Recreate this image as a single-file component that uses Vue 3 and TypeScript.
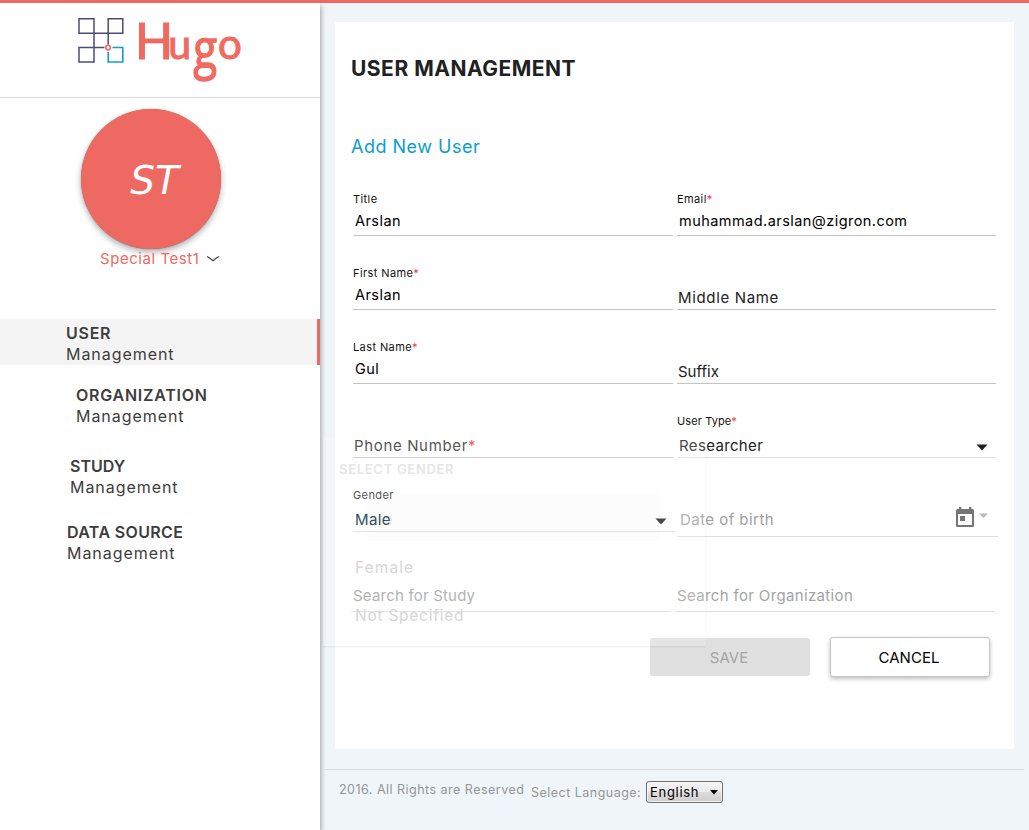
<script setup lang="ts">
interface NavItem {
  title: string
  kind: string
}

interface Field {
  key: string
  label?: string
  value?: string
  required?: boolean
  icon?: 'arrow' | 'calendar'
}

const navItems: NavItem[] = [
  { title: 'USER', kind: 'user' },
  { title: 'ORGANIZATION', kind: 'organization' },
  { title: 'STUDY', kind: 'study' },
  { title: 'DATA SOURCE', kind: 'source' },
]

const fields: Field[] = [
  { key: 'title', label: 'Title', value: 'Arslan' },
  { key: 'email', label: 'Email', value: 'muhammad.arslan@zigron.com', required: true },
  { key: 'first', label: 'First Name', value: 'Arslan', required: true },
  { key: 'middle', label: 'Middle Name' },
  { key: 'last', label: 'Last Name', value: 'Gul', required: true },
  { key: 'suffix', label: 'Suffix' },
  { key: 'phone', label: 'Phone Number', required: true },
  { key: 'type', label: 'User Type', value: 'Researcher', required: true, icon: 'arrow' },
  { key: 'gender', label: 'Gender', value: 'Male', icon: 'arrow' },
  { key: 'birth', label: 'Date of birth', icon: 'calendar' },
  { key: 'find-study', label: 'Search for Study' },
  { key: 'find-org', label: 'Search for Organization' },
]
</script>

<template>
  <div class="page">
    <aside class="sidebar">
      <div class="brand">
        <svg class="logo" width="180" height="90" viewBox="70 3 180 90">
          <g fill="none" stroke="#4d4b7c" stroke-width="1.5">
            <path d="M79 18.8H94V33.3H79ZM108.2 18.8H122.8V33.3H108.2ZM79 47.5H94V62H79Z" />
            <path d="M94 33.3H108.2V44.5M94 33.3V47.5H104.5" />
          </g>
          <path d="M112.5 47.5H122.8V62H108.2V52" fill="none" stroke="#109cd8" stroke-width="1.6" />
          <circle cx="108.1" cy="47.6" r="2.3" fill="#fff" stroke="#ef6862" stroke-width="1.6" />
          <g class="wordmark">
            <text x="135" y="58.5" font-size="50">H</text>
            <text x="168.3" y="58.8" font-size="41">u</text>
            <text class="wordmark-g" transform="translate(193.2 67.5) scale(1.07 1.35)" font-size="41">g</text>
            <text x="218" y="58.800" font-size="42">o</text>
          </g>
        </svg>
      </div>
      <div class="profile">
        <div class="avatar"><span>ST</span></div>
        <div class="account">
          <span class="account-name">Special Test1</span>
          <svg width="14" height="8" viewBox="0 0 14 8"><path d="M1 1.5Q4 3 7 5.8Q10 3 13 1.5" fill="none" stroke="#444" stroke-width="1.2" /></svg>
        </div>
      </div>
      <nav>
        <a v-for="item in navItems" :key="item.kind" class="nav-item" :class="'nav-' + item.kind">
          <b>{{ item.title }}</b>
          <span>Management</span>
        </a>
      </nav>
    </aside>

    <main>
      <section class="card">
        <h1>USER MANAGEMENT</h1>
        <h2>Add New User</h2>
        <form class="fields">
          <div
            v-for="f in fields"
            :key="f.key"
            class="field"
            :class="['f-' + f.key, f.value ? 'filled' : 'empty']"
          >
            <label><span class="label-text">{{ f.label }}</span><i v-if="f.required">*</i></label>
            <div v-if="f.value" class="value">{{ f.value }}</div>
            <svg v-if="f.icon === 'arrow'" class="arrow" width="12" height="7" viewBox="0 0 12 7"><path d="M.5 .5H11.5L6 6.5Z" fill="currentColor" /></svg>
            <svg v-if="f.icon === 'calendar'" class="calendar" width="34" height="22" viewBox="0 0 34 22">
              <path d="M3 0H5.4V2H13V0H15.4V2H16.5Q18 2 18 3.5V18.5Q18 20 16.5 20H1.5Q0 20 0 18.500V3.500Q0 2 1.500 2H3ZM2 7V18H16V7Z" fill="#757575" fill-rule="evenodd" />
              <rect x="4" y="9" width="5" height="5" fill="#757575" />
              <path d="M23 6.500H32L27.500 11Z" fill="#b9b9b9" />
            </svg>
          </div>
        </form>
        <div class="actions">
          <button class="save">SAVE</button>
          <button class="cancel">CANCEL</button>
        </div>
      </section>
      <footer>
        <span class="rights">2016. All Rights are Reserved</span>
        <span class="language">Select Language:</span>
        <div class="select">
          <span>English</span>
          <svg width="8" height="5" viewBox="0 0 8 5"><path d="M0 0H8L4 4.500Z" fill="#000" /></svg>
        </div>
      </footer>
    </main>

    <div class="menu">
      <div class="menu-title">SELECT GENDER</div>
      <div class="menu-item current">Male</div>
      <div class="menu-item female">Female</div>
      <div class="menu-item unset">Not Specified</div>
    </div>
  </div>
</template>

<style>
body {
  margin: 0;
  overflow: hidden;
}
</style>

<style scoped>
.page {
  position: relative;
  box-sizing: border-box;
  display: flex;
  width: 1029px;
  height: 830px;
  border-top: 3px solid #f1685f;
  background: #f0f5fa;
  font-family: Inter, "Open Sans", sans-serif;
  color: #212121;
  overflow: hidden;
}
.sidebar {
  flex: none;
  width: 320px;
  background: #fff;
  box-shadow: 1px 3px 5px rgba(0, 0, 0, 0.35);
}
.brand {
  height: 94px;
  padding-left: 70px;
  border-bottom: 1px solid #d9d9db;
}
.logo {
  display: block;
}
.wordmark {
  font-family: Lato, sans-serif;
  fill: #f16a62;
  stroke: #f16a62;
  stroke-width: 1.1;
}
.wordmark-g {
  font-family: "Open Sans", sans-serif;
}
.profile {
  height: 210px;
  padding: 11px 0 0 81px;
}
.avatar {
  display: flex;
  align-items: center;
  justify-content: center;
  width: 140px;
  height: 140px;
  border-radius: 50%;
  background: #ee6961;
  box-shadow: 0 3px 6px rgba(0, 0, 0, 0.32), 0 0 1px rgba(0, 0, 0, 0.5);
  color: #fff;
  font: italic 39px "DejaVu Sans", sans-serif;
}
.avatar span {
  padding: 3px 0 0 7px;
}
.account {
  display: flex;
  align-items: center;
  gap: 6px;
  height: 20px;
  padding-left: 19px;
  color: #ee6961;
  font-size: 15px;
  line-height: 20px;
}
.account-name {
  width: 100px;
  white-space: nowrap;
  letter-spacing: 0.55px;
}
.nav-item {
  display: block;
  box-sizing: border-box;
  height: 46px;
  padding: 4px 0 0 66px;
  font-size: 16px;
  line-height: 21px;
  color: #3d3d3d;
}
.nav-item b,
.nav-item span {
  display: block;
  height: 21px;
  white-space: nowrap;
}
.nav-item b {
  font-weight: 600;
  letter-spacing: 0.75px;
}
.nav-item span {
  letter-spacing: 0.95px;
}
.nav-user {
  border-right: 3px solid #ee6961;
  background: #f4f4f4;
}
.nav-organization {
  margin-top: 16px;
  padding-left: 76px;
}
.nav-study {
  margin-top: 25px;
  padding-left: 70px;
}
.nav-study b {
  letter-spacing: 0;
}
.nav-source {
  margin-top: 20px;
  padding-left: 67px;
}
.nav-source b {
  letter-spacing: 0.35px;
}
main {
  flex: 1;
  min-width: 0;
  padding: 19px 5px 0;
}
.card {
  box-sizing: border-box;
  width: 679px;
  height: 727px;
  margin-left: 10px;
  padding: 32px 16px 0;
  background: #fff;
}
h1,
h2 {
  margin: 0;
  white-space: nowrap;
}
h1 {
  font-size: 21px;
  line-height: 30px;
  font-weight: 700;
  letter-spacing: 0.5px;
}
h2 {
  margin-top: 48px;
  color: #0a9bd8;
  font-size: 18px;
  line-height: 30px;
  font-weight: 400;
  letter-spacing: 0.5px;
}
.fields {
  display: grid;
  grid-template-columns: 320px 319px;
  grid-template-rows: repeat(5, 74px) 80px;
  column-gap: 4px;
  margin-left: 2px;
}
.field {
  display: flex;
  flex-direction: column;
  box-sizing: border-box;
  border-bottom: 1px solid #c4c4c4;
  padding-top: 29px;
  white-space: nowrap;
}
label {
  height: 16px;
  font-size: 11px;
  line-height: 16px;
  letter-spacing: 0.4px;
  color: #111;
}
label i {
  color: #f33;
  font-style: normal;
}
.value {
  height: 20px;
  margin-top: 4px;
  padding-left: 2px;
  font-size: 14.5px;
  line-height: 20px;
  letter-spacing: 0.45px;
  color: #000;
}
.empty label {
  height: 20px;
  margin-top: 23px;
  padding-left: 1px;
  font-size: 15px;
  line-height: 20px;
  letter-spacing: 0.65px;
  color: #222;
}
.field .arrow {
  align-self: flex-end;
  margin: -12px 8px 0 0;
  color: #212121;
}
.f-type label {
  letter-spacing: 0.1px;
}
.f-type,
.f-gender {
  border-color: #e0e0e0;
}
.f-type .value,
.f-gender .value {
  margin-top: 7px;
  padding-left: 2px;
  font-size: 15px;
  letter-spacing: 0.35px;
  color: #222;
}
.field.f-gender {
  width: 322px;
}
.f-gender .value {
  color: #0c1b2c;
}
.f-gender label,
.f-phone label {
  color: #303030;
}
.f-suffix label {
  letter-spacing: 0;
}
.field.f-birth {
  width: 321px;
  height: 79px;
  border-color: #ddd;
}
.f-birth label {
  padding-left: 3px;
  letter-spacing: 0.45px;
  color: #a0a0a0;
}
.calendar {
  align-self: flex-end;
  margin: -23px 8px 0 0;
}
.f-find-study,
.f-find-org {
  margin: 0 2px 0 -2px;
  border-color: #ddd;
}
.f-find-study label,
.f-find-org label {
  margin-top: 25px;
  padding-left: 2px;
  letter-spacing: 0.35px;
  color: #a3a3a3;
}
.f-find-study label {
  letter-spacing: 0.2px;
}
.actions {
  display: flex;
  gap: 20px;
  margin: 26px 0 0 299px;
}
button {
  box-sizing: border-box;
  width: 160px;
  height: 38px;
  padding: 0 2px 0 0;
  border: 0;
  border-radius: 3px;
  background: #e0e0e0;
  color: #a3a3a3;
  font: 15px Inter, sans-serif;
}
.cancel {
  height: 40px;
  margin-top: -1px;
  border: 1px solid #c4c4c4;
  background: #fff;
  box-shadow: 0 2px 4px rgba(0, 0, 0, 0.26);
  color: #000;
}
footer {
  display: flex;
  height: 60px;
  margin-top: 20px;
  border-top: 1px solid #dadde0;
  color: #959595;
  font-size: 12.5px;
  line-height: 20px;
  letter-spacing: 0.48px;
  white-space: nowrap;
}
.rights {
  width: 192px;
  margin: 10px 0 0 14px;
}
.language {
  width: 115px;
  margin-top: 13px;
}
.select {
  box-sizing: border-box;
  display: flex;
  align-items: center;
  justify-content: space-between;
  width: 77px;
  height: 22px;
  margin-top: 11px;
  padding: 0 4px 0 3px;
  border: 1px solid #707070;
  border-radius: 3px;
  background: linear-gradient(#f3f3f3, #ebebeb 48%, #dcdcdc 52%, #cecece);
  box-shadow: inset 0 0 0 1px rgba(255, 255, 255, 0.7);
  color: #000;
  font-size: 13px;
  letter-spacing: 0.7px;
}
.menu {
  position: absolute;
  box-sizing: border-box;
  left: 323px;
  top: 434px;
  width: 383px;
  height: 209px;
  padding-top: 22px;
  background: rgba(255, 255, 255, 0.18);
  box-shadow: 0 1px 2px rgba(0, 0, 0, 0.07);
}
.menu-title {
  height: 20px;
  margin-bottom: 15px;
  padding-left: 16px;
  color: #e6e6e6;
  font-size: 13px;
  font-weight: 600;
  line-height: 20px;
  letter-spacing: 0.7px;
}
.menu-item {
  height: 48px;
  padding-left: 32px;
  color: #d6d6d6;
  font-size: 15.5px;
  line-height: 51px;
  letter-spacing: 0.75px;
}
.female {
  letter-spacing: 1.1px;
}
.current {
  height: 47px;
  margin: 0 46px 1px 44px;
  padding: 0;
  background: rgba(0, 0, 0, 0.013);
  color: rgba(30, 150, 220, 0.16);
  text-indent: -12px;
}
</style>
